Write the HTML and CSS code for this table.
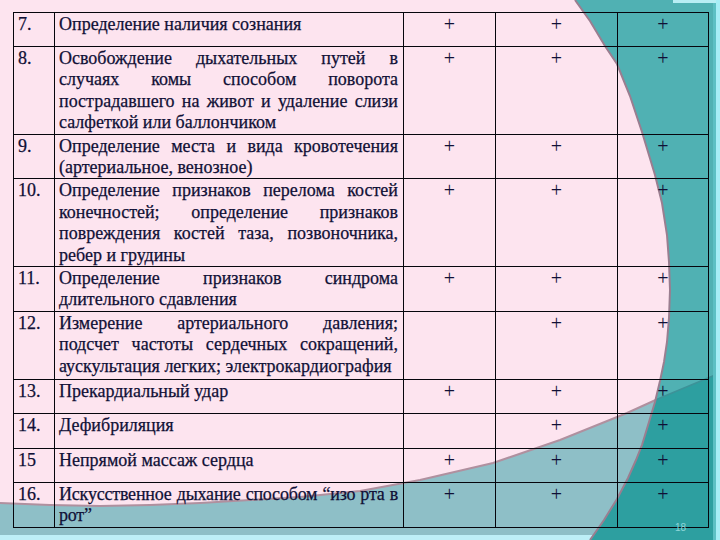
FILE: index.html
```html
<!DOCTYPE html>
<html lang="ru">
<head>
<meta charset="utf-8">
<title>Slide 18</title>
<link rel="stylesheet" href="styles.css">
</head>
<body>
<div class="slide">
  <svg class="backdrop" width="720" height="540" viewBox="0 0 720 540" aria-hidden="true">
    <defs>
      <clipPath id="rightClip">
        <path d="M575,0 L590,21 L605,46 L617,64 L630,96 L642,132 L655,175 L662,203 L667,235 L669,262 L670,290 L669,318 L667,342 L664,362 L660,381 L655,402 L649,422 L642,445 L636,460 L628,478 L617,499 L604,520 L590,540 L720,540 L720,0 Z"/>
      </clipPath>
    </defs>
    <rect x="0" y="0" width="720" height="540" fill="#fde4ef"/>
    <rect x="0" y="535" width="720" height="5" fill="#bdeff7"/>
    <path d="M0,503 L50,505 L100,506 L150,505 L200,503 L250,500 L300,497 L360,491 L420,480 L493,463 L560,440 L627,413 L660,398 L720,373 L720,535 L0,535 Z" fill="#8ebfc7"/>
    <path d="M0,503 L50,505 L100,506 L150,505 L200,503 L250,500 L300,497 L360,491 L420,480 L493,463 L560,440 L627,413 L660,398 L720,373" fill="none" stroke="#b0909f" stroke-width="2"/>
    <path d="M575,0 L590,21 L605,46 L617,64 L630,96 L642,132 L655,175 L662,203 L667,235 L669,262 L670,290 L669,318 L667,342 L664,362 L660,381 L655,402 L649,422 L642,445 L636,460 L628,478 L617,499 L604,520 L590,540 L720,540 L720,0 Z" fill="#50b1b3"/>
    <g clip-path="url(#rightClip)">
      <path d="M0,503 L50,505 L100,506 L150,505 L200,503 L250,500 L300,497 L360,491 L420,480 L493,463 L560,440 L627,413 L660,398 L720,373 L720,540 L0,540 Z" fill="#2d9fa0"/>
      <path d="M0,503 L100,506 L200,503 L300,497 L360,491 L420,480 L493,463 L560,440 L627,413 L660,398 L720,373" fill="none" stroke="#3d9298" stroke-width="1.5"/>
    </g>
    <path d="M575,0 L590,21 L605,46 L617,64 L630,96 L642,132 L655,175 L662,203 L667,235 L669,262 L670,290 L669,318 L667,342 L664,362 L660,381 L655,402 L649,422 L642,445 L636,460 L628,478 L617,499 L604,520 L590,540" fill="none" stroke="#9a7e90" stroke-width="2"/>
    <rect x="673" y="0" width="47" height="3" fill="#b8eef4"/>
    <rect x="713" y="3" width="3" height="537" fill="#5cc0c4"/>
    <rect x="716" y="0" width="4" height="540" fill="#a6eef6"/>
  </svg>

  <table class="grid">
    <colgroup>
      <col class="c-num"><col class="c-text"><col class="c-a"><col class="c-b"><col class="c-c">
    </colgroup>
    <tr class="h34"><td class="num">7.</td><td class="txt">Определение наличия сознания</td><td class="mark">+</td><td class="mark">+</td><td class="mark">+</td></tr>
    <tr class="h86"><td class="num">8.</td><td class="txt">Освобождение дыхательных путей в случаях комы способом поворота пострадавшего на живот и удаление слизи салфеткой или баллончиком</td><td class="mark">+</td><td class="mark">+</td><td class="mark">+</td></tr>
    <tr class="h43"><td class="num">9.</td><td class="txt">Определение места и вида кровотечения (артериальное, венозное)</td><td class="mark">+</td><td class="mark">+</td><td class="mark">+</td></tr>
    <tr class="h87"><td class="num">10.</td><td class="txt">Определение признаков перелома костей конечностей; определение признаков повреждения костей таза, позвоночника, ребер и грудины</td><td class="mark">+</td><td class="mark">+</td><td class="mark">+</td></tr>
    <tr class="h44"><td class="num">11.</td><td class="txt">Определение признаков синдрома длительного сдавления</td><td class="mark">+</td><td class="mark">+</td><td class="mark">+</td></tr>
    <tr class="h68"><td class="num">12.</td><td class="txt">Измерение артериального давления; подсчет частоты сердечных сокращений, аускультация легких; электрокардиография</td><td class="mark"></td><td class="mark">+</td><td class="mark">+</td></tr>
    <tr class="h34"><td class="num">13.</td><td class="txt">Прекардиальный удар</td><td class="mark">+</td><td class="mark">+</td><td class="mark">+</td></tr>
    <tr class="h35"><td class="num">14.</td><td class="txt">Дефибриляция</td><td class="mark"></td><td class="mark">+</td><td class="mark">+</td></tr>
    <tr class="h34"><td class="num">15</td><td class="txt">Непрямой массаж сердца</td><td class="mark">+</td><td class="mark">+</td><td class="mark">+</td></tr>
    <tr class="h43"><td class="num">16.</td><td class="txt tight">Искусственное дыхание способом “изо рта в рот”</td><td class="mark">+</td><td class="mark">+</td><td class="mark">+</td></tr>
  </table>

  <div class="page-no">18</div>
</div>
</body>
</html>
```

FILE: styles.css
```css
* {
  box-sizing: border-box;
}

html, body {
  margin: 0;
  padding: 0;
  background: #fde4ef;
}

.slide {
  position: relative;
  width: 720px;
  height: 540px;
  overflow: hidden;
  padding: 12px 0 0 13px;
  font-family: "Liberation Serif", "DejaVu Serif", serif;
  color: #101036;
}

.backdrop {
  position: absolute;
  left: 0;
  top: 0;
  z-index: 0;
}

.grid {
  position: relative;
  z-index: 1;
  border-collapse: collapse;
  table-layout: fixed;
  width: 695px;
  font-family: "Liberation Serif", "DejaVu Serif", serif;
  font-size: 18px;
  line-height: 21.4px;
  -webkit-text-stroke: 0.25px #101036;
}

.c-num { width: 41px; }
.c-text { width: 349px; }
.c-a { width: 92px; }
.c-b { width: 122px; }
.c-c { width: 91px; }

.grid td {
  border: 1px solid #05050c;
  vertical-align: top;
  padding: 1px 5px 0 4px;
}

.grid .txt {
  text-align: justify;
}

.grid .tight {
  letter-spacing: -0.2px;
}

.grid .mark {
  text-align: center;
  padding-left: 0;
  padding-right: 0;
  font-size: 20px;
  -webkit-text-stroke: 0;
}

.h34 { height: 34px; }
.h35 { height: 35px; }
.h43 { height: 43px; }
.h44 { height: 44px; }
.h68 { height: 68px; }
.h86 { height: 86px; }
.h87 { height: 87px; }

.page-no {
  position: absolute;
  left: 675px;
  top: 522px;
  font-family: "Liberation Sans", Arial, sans-serif;
  font-size: 10px;
  color: #8ed6d8;
  z-index: 1;
}
```
